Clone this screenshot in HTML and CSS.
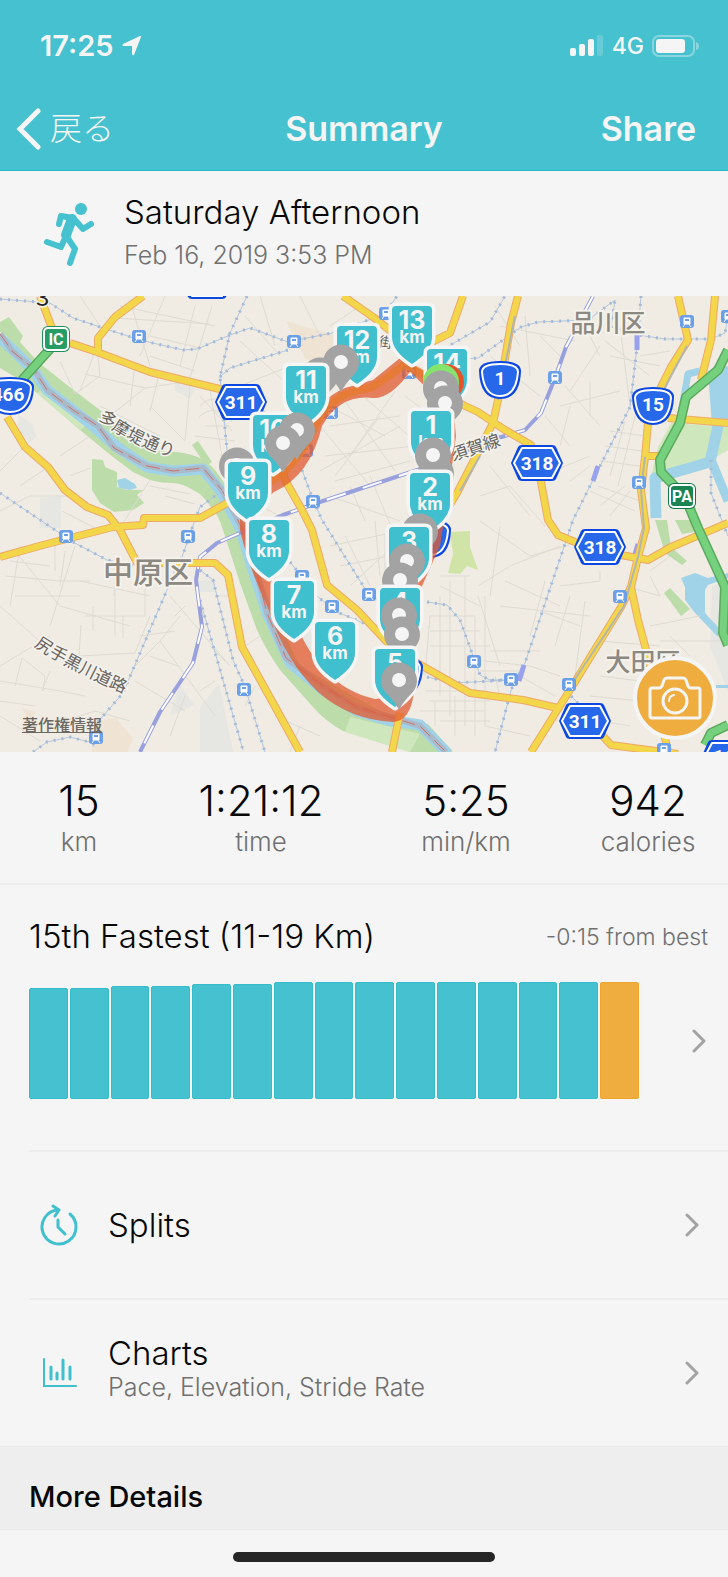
FILE: index.html
```html
<!DOCTYPE html>
<html lang="en">
<head>
    <meta charset="UTF-8">
    <meta name="viewport" content="width=device-width, initial-scale=1.0">
    <title>Summary</title>
    <link rel="stylesheet" href="styles.css">
</head>
<body>

    <header class="header">
        <div class="status-bar">
            <div class="status-left">
                <span class="clock">17:25</span>
                <svg width="20" height="20" viewBox="0 0 20 20"><path d="M19 1 L12 19 Q11 20 10 18 L10 10 L1 10 Q0 9 1 8 L18 0 Q20 0 19 1 Z" fill="#f5f5f5"/></svg>
            </div>
            <div class="status-right">
                <svg width="34" height="22" viewBox="0 0 34 22" fill="#f5f5f5">
                    <rect x="0" y="13" width="6" height="8" rx="2"/>
                    <rect x="9" y="9" width="6" height="12" rx="2"/>
                    <rect x="18" y="4" width="6" height="17" rx="2"/>
                    <rect x="27" y="0" width="6" height="21" rx="2" opacity="0.2"/>
                </svg>
                <span class="network">4G</span>
                <svg width="48" height="22" viewBox="0 0 48 22">
                    <rect x="1" y="1" width="41" height="20" rx="6" fill="none" stroke="#f5f5f5" stroke-width="2" opacity="0.4"/>
                    <rect x="4" y="4" width="29" height="14" rx="3" fill="#f5f5f5"/>
                    <path d="M44 7 Q47 8 47 11 Q47 14 44 15 Z" fill="#f5f5f5" opacity="0.4"/>
                </svg>
            </div>
        </div>
        <nav class="nav-bar">
            <a class="back" href="#">
                <svg width="26" height="42" viewBox="0 0 26 42"><path d="M22 3 L4 21 L22 39" fill="none" stroke="#f5f5f5" stroke-width="5" stroke-linecap="round"/></svg>
                <span>戻る</span>
            </a>
            <h1>Summary</h1>
            <button class="share">Share</button>
        </nav>
    </header>

    <section class="activity">
        <svg class="runner" width="52" height="66" viewBox="0 0 52 66" fill="none" stroke="#45c1cf" stroke-linecap="round" stroke-linejoin="round">
            <circle cx="37" cy="8" r="6" fill="#45c1cf" stroke="none"/>
            <path d="M15 23 L17 15 L29 17" stroke-width="6"/>
            <path d="M28 18 L22 34" stroke-width="10"/>
            <path d="M31 19 L39 28 L47 23" stroke-width="6"/>
            <path d="M22 35 L17 46 L3 41" stroke-width="6"/>
            <path d="M23 36 L31 48 L26 62" stroke-width="6"/>
        </svg>
        <div>
            <h2>Saturday Afternoon</h2>
            <p>Feb 16, 2019 3:53 PM</p>
        </div>
    </section>

    <section class="map">
        <svg class="map-canvas" viewBox="0 0 728 456">
            <defs>
                <g id="station">
                    <rect x="-7" y="-7" width="14" height="13" rx="3" fill="#6b9fe8"/>
                    <path d="M-3 -4 H3 V2 H-3 Z M-4 5 L-2 2 M4 5 L2 2" fill="#fff" stroke="#fff" stroke-width="1"/>
                    <path d="M-2 -2 H2" stroke="#6b9fe8" stroke-width="2"/>
                </g>
                <g id="hex">
                    <path d="M-15 -18 H15 Q18 -18 19 -16 L26 0 L19 16 Q18 18 15 18 H-15 Q-18 18 -19 16 L-26 0 L-19 -16 Q-18 -18 -15 -18 Z" fill="#0b47e0"/>
                    <path d="M-15 -15 H15 L23 0 L15 15 H-15 L-23 0 Z" fill="#2767ea" stroke="#fff" stroke-width="2" stroke-linejoin="round"/>
                </g>
                <g id="national">
                    <path d="M0 -19 Q21 -19 21 -9 Q20 19 0 19 Q-20 19 -21 -9 Q-21 -19 0 -19 Z" fill="#0b47e0"/>
                    <path d="M0 -16 Q18 -16 18 -8 Q16 16 0 16 Q-16 16 -18 -8 Q-18 -16 0 -16 Z" fill="#2767ea" stroke="#fff" stroke-width="2"/>
                </g>
                <path id="flag" d="M-20 4 Q-20 0 -16 0 H16 Q20 0 20 4 V31 Q20 45 0 58 Q-20 45 -20 31 Z" fill="#40bfce" stroke="#f5f5f5" stroke-width="7" paint-order="stroke" stroke-linejoin="round"/>
                <g id="pin">
                    <path d="M0 30 Q-4 22 -12 14 A18 18 0 1 1 12 14 Q4 22 0 30 Z" fill="#a3a3a3"/>
                    <circle r="7" fill="#f5f5f5"/>
                </g>
            </defs>

            <rect width="728" height="456" fill="#f0ece4"/>

            <!-- blocks and parks -->
            <g fill="#e6e6e3">
                <path d="M40 202 L61 200 L61 232 L40 232 Z M18 118 L32 128 L36 140 L30 147 L18 132 Z"/>
                <path d="M196 285 L216 283 L214 296 H200 Z M179 388 L194 409 L170 420 Z M200 412 L219 387 L233 456 H200 Z"/>
                <path d="M175 86 L195 92 L190 103 L175 95 Z M712 290 L728 285 V395 L710 350 Z M300 330 L318 340 L322 360 L306 352 Z"/>
            </g>
            <path d="M286 25 L335 39 V70 L305 63 Z M22 412 L36 416 L28 425 Z M96 425 L116 422 L133 442 L128 456 H92 Z" fill="#efe3d3"/>
            <g fill="#bcdcaa">
                <path d="M0 26 L9 21 L23 40 L19 48 L0 36 Z"/>
                <path d="M0 38 L20 46 L38 66 L67 89 L100 114 L127 137 Q140 148 150 152 Q162 156 177 156 Q192 158 200 162 Q212 168 220 181 L240 210 L262 290 L300 370 L380 415 L428 428 L453 456 H410 L343 435 Q325 425 313 411 L280 374 Q266 354 257 334 L240 287 L223 234 Q218 218 213 214 Q203 198 193 194 Q184 188 173 187 Q160 187 150 184 L133 176 L113 161 L80 134 L37 97 L20 84 L0 72 Z"/>
                <path d="M92 163 L103 164 L105 171 L117 176 V191 L127 194 L143 194 L137 199 L144 207 L133 214 L114 216 L100 207 L92 194 Z M192 149 L198 145 L212 166 L206 170 Z"/>
                <path d="M655 224 H667 L671 251 L687 265 L682 269 L665 257 Z M675 224 H690 L694 236 L682 238 Z M664 297 L670 292 L690 313 L681 320 Z"/>
            </g>
            <path d="M450 236 L470 235 V251 L478 274 L467 270 L460 278 L448 277 L453 258 Z" fill="#d0e4a8"/>
            <path d="M37 97 L45 92 L90 127 L80 134 Z M350 421 L420 438 L410 456 L345 436 Z M671 127 L728 131 V154 L708 166 L665 179 L650 184 L658 151 Z" fill="#cfe7bd"/>

            <!-- water -->
            <g fill="none" stroke="#a1d3e8" stroke-linejoin="round">
                <path d="M0 42 L13 54 L33 74 L47 94 L73 114 L93 130 L117 151 L147 171 L173 175 L203 173 L220 194 L240 232 L253 274 L267 317 L290 367 L323 394 L357 415 L387 424 L420 429 L448 458" stroke-width="11"/>
                <path d="M700 75 L688 78 L681 118" stroke-width="7"/>
                <path d="M656 222 L655 182 L710 166 L718 130 L719 70" stroke-width="11"/>
                <path d="M712 166 L728 205" stroke-width="9"/>
            </g>
            <path d="M708 75 L728 70 V130 H712 Z" fill="#a1d3e8"/>
            <path d="M117 184 L125 182 L135 188 L137 192 L130 194 L119 192 Z M681 282 L695 277 L708 282 L728 277 V282 L708 289 L705 294 V317 L718 331 V341 L695 317 L685 304 V291 Z M716 389 H728 V392 H716 Z" fill="#a1d3e8"/>
            <path d="M0 38 L13 56 L33 72 L47 94 L73 114 L98 130 L114 152 L147 170 L173 175 L203 172 L222 194 L243 234 L257 278 L267 317 L286 362 L323 390 L357 411 L387 420 L420 430 L446 456" fill="none" stroke="#a9bacb" stroke-width="6"/>
            <path d="M0 38 L13 56 L33 72 L47 94 L73 114 L98 130 L114 152 L147 170 L173 175 L203 172 L222 194 L243 234 L257 278 L267 317 L286 362 L323 390 L357 411 L387 420 L420 430 L446 456" fill="none" stroke="#cf7168" stroke-width="1" stroke-dasharray="14 6"/>

            <!-- small streets -->
            <g fill="none" stroke="#dedbd3" stroke-width="1">
                <path d="M80 0 L100 30 M130 5 L150 70 M165 0 L140 60 M195 10 L180 70 M120 10 L215 30 M150 40 L200 52 M100 42 L80 95 M150 60 L195 75 M135 68 L130 110 M160 75 L150 115 M115 22 L210 28 M212 10 L190 82"/>
                <path d="M60 65 L75 98 L100 80 L98 60 M85 78 L145 92 L110 120 M145 92 L190 85 M100 110 L160 140 M150 110 L185 145 M185 145 L190 90 M200 110 Q215 95 230 112 M198 122 Q215 105 232 126 M205 130 L230 130 M195 140 L235 145 M210 95 L222 160 M200 100 L232 135 M60 160 L90 140 M70 180 L90 172"/>
                <path d="M0 175 L25 150 M20 190 L48 171 M0 215 L30 200 L70 200 M150 184 L120 232 M150 190 L190 198 M62 215 L95 232 M165 200 L195 208"/>
                <path d="M245 20 L280 60 M260 0 L275 50 M240 90 L290 70 M300 0 L320 40 M360 10 L330 30 M240 45 L300 100 M310 100 L385 140 M330 130 L400 120 M325 160 L415 150 M320 175 L400 130 M345 105 L395 175 M365 102 L415 145 M320 130 L370 190 M335 185 L410 165 M350 190 L365 225 M380 120 L335 180 M395 95 L350 160 M330 200 L400 225 M370 180 L395 240 M250 205 L290 225 M405 100 L425 115"/>
                <path d="M490 60 L540 100 M525 20 L530 80 M540 40 L560 60 M560 110 L620 95 M565 90 L600 130 M590 85 V120 M600 50 L570 95 M610 60 L660 70 M605 45 L650 80 M620 30 L630 110 M580 20 L600 60 M500 30 L575 45 M640 60 L670 55 M545 120 L570 150 M560 150 L570 110 M540 180 L590 160 M480 200 L510 190 L545 230 M490 170 L530 220 M625 125 L610 180 M635 120 L618 190 M610 135 L645 140 M605 150 L642 155 M600 165 L640 170 M598 190 L640 205 M590 195 L635 215 M600 210 L625 190 M610 220 L630 195 M660 100 L690 130 M590 170 L570 185 M495 10 L520 50"/>
                <path d="M15 255 L60 310 L130 330 M10 265 L50 270 M5 280 L60 285 M15 300 L80 300 M20 250 L10 310 M55 250 V275 M65 255 L60 290 M75 250 L50 330 M0 310 L45 350 M60 285 H90 M93 310 V335 M85 320 H145 V290 M81 329 L79 360 L135 357 L150 320 M115 290 V340 M123 320 V342 M115 262 L114 300 M150 300 L80 285 M0 370 L50 340 M15 390 L22 362 L45 380 L43 395 M0 385 L60 395 L85 400 M50 375 L42 395 M160 345 L180 320 M160 345 L215 420 M160 345 L135 370 M140 340 L175 335 M150 360 L178 370 M170 300 L230 370 M185 310 L175 320 M135 385 L185 415 M200 395 L215 385 M0 405 L35 410 M0 420 L40 445 M50 430 L95 415 L130 425 M170 440 L185 400 M215 300 L232 300 M225 365 L210 350"/>
                <path d="M330 250 L400 235 M340 270 L390 260 M350 290 L415 230 M375 225 L380 280 M345 240 L370 290 M385 240 V290 M440 280 H470 M440 290 L480 310 M450 285 V420 M465 280 V430 M475 320 V440 M485 300 V430 M430 320 H475 M430 335 H480 M430 350 H490 M425 395 H488 M430 405 H490 M420 415 H485 M440 425 H490 M430 320 L425 380 M440 300 V400 M435 405 V430 M455 400 V440 M255 390 L245 410 M260 340 L245 350 M275 420 L320 440 M300 430 L290 456"/>
                <path d="M480 225 L530 260 L600 240 M478 290 L510 270 L560 250 M505 285 L560 310 M500 310 L590 320 M540 315 L580 330 M560 290 L600 285 V275 M545 285 L530 340 M570 300 L555 350 M585 305 L575 380 M500 230 L490 300 M478 300 L500 370 M490 355 H540 M485 365 L530 370 M495 380 L500 400 M480 375 H520 M650 275 L670 260 M640 270 L625 300 M625 290 L660 300 L650 280 M600 345 L660 350 M610 360 H650 M600 380 L640 385 M590 400 L640 405 M570 420 L630 430 M650 330 L700 320 M660 345 L720 345 M670 340 L690 360 M530 370 L560 380 M520 380 L555 400 M485 430 L530 440"/>
            </g>

            <!-- rail lines -->
            <g class="rail">
                <path id="rails" d="M0 3 L50 7 L73 22 L100 31 L140 44 L183 54 L197 53 L230 39 L250 32 L288 46 L332 37 L385 18 L397 0 M247 0 L230 37 L220 81 L227 154 M220 81 L230 72 L288 54 M0 197 L73 246 L107 264 L133 269 M240 180 L227 191 L200 211 L195 224 L182 261 L167 294 L137 364 L123 397 L97 427 L93 451 M200 274 L213 284 L233 364 L245 391 L265 456 M200 304 L243 454 M33 456 L47 446 L70 441 L93 447 M641 0 L637 51 L630 111 L598 174 L573 224 L525 367 L511 394 L495 456 M430 60 L447 51 L490 26 L505 0 M450 64 L478 62 L521 31 L538 26 L588 24 L615 4 L611 31 L638 39 L665 43 H711 L725 37 L728 20 M302 174 L312 201 L322 224 L367 296 L400 320 M290 266 L318 301 L337 316 L390 338 M427 306 L447 309 L460 324 L480 379 L490 384 L511 384 M427 381 L453 387 L511 384 M711 164 V197 L728 240 M571 400 L600 430 L611 449 L664 453"/>
            </g>
            <use href="#rails" class="rail-ties"/>
            <g fill="none" stroke-linejoin="round">
                <path d="M593 0 L566 51 L555 82 L541 117 L525 134 L498 142 L417 174 L320 206 L283 219 L240 237 L217 247 L200 261 L196 284 L202 331 L193 367 L160 416 L140 456" stroke="#98a1de" stroke-width="4"/>
                <path d="M593 0 L566 51 L555 82 L541 117 L525 134 L498 142 L417 174 L320 206 L283 219 L240 237 L217 247 L200 261 L196 284 L202 331 L193 367 L160 416 L140 456" stroke="#fff" stroke-width="2" stroke-dasharray="20 18"/>
                <path d="M637 39 V54 M598 170 L593 185 M638 248 L634 262 M524 369 L519 385" stroke="#98a1ee" stroke-width="5"/>
            </g>

            <!-- main roads, drawn twice for the orange edge -->
            <g fill="none" stroke="#eda968" stroke-width="8" stroke-linejoin="round">
                <path id="roads" d="M40 0 L53 35 M70 47 L97 56 L150 76 L240 98 L275 130 L285 184 L302 214 L312 234 L327 289 L357 314 L387 346 L417 367 L470 397 L523 404 L558 412 M143 0 L115 21 L98 42 V57 M7 121 L25 151 L48 171 L65 194 L87 211 L108 219 L120 234 L137 267 H215 L228 279 L242 351 L273 407 L300 456 M0 261 L43 249 L113 231 L143 229 L144 222 H200 L240 200 M343 0 L373 21 L410 50 M463 0 L450 37 L430 47 M430 90 L463 109 L478 116 L505 134 L531 149 L541 186 L548 224 L558 239 L575 246 L621 259 L648 264 L671 251 L728 227 M518 0 L511 27 L498 104 L493 127 L457 197 L440 225 M678 0 L688 44 L671 71 L661 91 L648 127 L645 161 L641 194 L646 232 L638 261 L631 291 L621 311 L578 381 L531 456 M631 291 L638 324 L648 361 L668 456 M715 0 L711 44 L701 84 M668 122 L728 127 M645 160 H660 M600 437 L611 449 L678 458 M400 417 L392 456"/>
            </g>
            <use href="#roads" fill="none" class="road-fill"/>
            <path d="M687 50 L671 80 L661 100 M645 161 L641 194 L644 232 L638 261 L624 310 L571 389 M515 20 L498 104 M480 160 L460 195" fill="none" stroke="#b3b5ae" stroke-width="2"/>
            <g fill="none" stroke-linejoin="round">
                <path d="M728 54 L718 74 L686 101 L680 127 L660 164 L661 176 L685 201 L698 232 L725 291 L723 337 L728 349 M705 449 L711 437 L728 429 M50 53 L22 84" stroke="#5ba95c" stroke-width="10"/>
                <path d="M728 54 L718 74 L686 101 L680 127 L660 164 L661 176 L685 201 L698 232 L725 291 L723 337 L728 349 M705 449 L711 437 L728 429 M50 53 L22 84" stroke="#76d17f" stroke-width="7"/>
            </g>

            <!-- stations -->
            <use href="#station" x="139" y="41"/>
            <use href="#station" x="294" y="46"/>
            <use href="#station" x="386" y="18"/>
            <use href="#station" x="409" y="77"/>
            <use href="#station" x="331" y="117"/>
            <use href="#station" x="306" y="155"/>
            <use href="#station" x="313" y="206"/>
            <use href="#station" x="687" y="26"/>
            <use href="#station" x="728" y="21"/>
            <use href="#station" x="555" y="82"/>
            <use href="#station" x="639" y="187"/>
            <use href="#station" x="66" y="241"/>
            <use href="#station" x="188" y="241"/>
            <use href="#station" x="244" y="394"/>
            <use href="#station" x="96" y="442"/>
            <use href="#station" x="302" y="281"/>
            <use href="#station" x="332" y="311"/>
            <use href="#station" x="369" y="299"/>
            <use href="#station" x="474" y="366"/>
            <use href="#station" x="511" y="384"/>
            <use href="#station" x="620" y="301"/>
            <use href="#station" x="569" y="389"/>
            <use href="#station" x="664" y="454"/>

            <!-- place names -->
            <g class="place">
                <text x="608" y="36" class="area">品川区</text>
                <text x="148" y="287" class="city">中原区</text>
                <text x="643" y="375" class="area">大田区</text>
            </g>
            <path id="tamatsutsumi" d="M98 122 Q125 148 185 165" fill="none"/>
            <path id="shitte" d="M34 350 Q75 378 140 404" fill="none"/>
            <g class="street-name">
                <text><textPath href="#tamatsutsumi">多摩堤通り</textPath></text>
                <text><textPath href="#shitte">尻手黒川道路</textPath></text>
                <text transform="translate(453 165) rotate(-18)">須賀線</text>
                <text class="small" transform="translate(378 50) rotate(10)">街</text>
                <text class="dark" x="36" y="10">3</text>
            </g>

            <!-- road shields -->
            <g class="shield">
                <use href="#hex" x="207" y="-15"/>
                <use href="#hex" x="241" y="106"/><text x="241" y="113">311</text>
                <use href="#hex" x="537" y="167"/><text x="537" y="174">318</text>
                <use href="#hex" x="600" y="251"/><text x="600" y="258">318</text>
                <use href="#hex" x="585" y="425"/><text x="585" y="432">311</text>
                <use href="#hex" x="727" y="462"/><text x="724" y="467">16</text>
                <use href="#national" x="500" y="84"/><text x="500" y="89">1</text>
                <use href="#national" x="653" y="110"/><text x="653" y="115">15</text>
                <use href="#national" x="430" y="243"/>
                <use href="#national" x="402" y="380"/>
                <path d="M10 -19 Q34 -19 34 -9 Q33 19 10 19 Q-13 19 -14 -9 Q-14 -19 10 -19 Z" transform="translate(0 100)" fill="#0b47e0"/>
                <path d="M10 -16 Q31 -16 31 -8 Q29 16 10 16 Q-9 16 -11 -8 Q-11 -16 10 -16 Z" transform="translate(0 100)" fill="#2767ea" stroke="#fff" stroke-width="2"/>
                <text x="8" y="105">466</text>
            </g>
            <g class="facility">
                <rect x="42" y="30" width="28" height="26" rx="6" fill="#1e8f5c"/>
                <rect x="44" y="32" width="24" height="22" rx="4" fill="#279d66" stroke="#fff" stroke-width="2"/>
                <text x="56" y="49">IC</text>
                <rect x="668" y="187" width="28" height="26" rx="6" fill="#0f7748"/>
                <rect x="670" y="189" width="24" height="22" rx="4" fill="#1a8552" stroke="#fff" stroke-width="2"/>
                <text x="682" y="206">PA</text>
            </g>

            <!-- run route -->
            <path d="M240 190 Q282 174 305 136 Q318 103 345 92 L373 84 L400 62 L427 77 L452 100 L456 140 L448 200 L440 250 L422 290 L414 350 L414 395 Q411 425 393 426 Q350 424 318 396 Q285 365 268 312 Q248 270 240 234 Z M274 196 L256 212 Q262 256 290 312 Q316 390 375 403 L400 400 L404 320 L425 240 L440 180 L444 110 L430 95 L410 76 Q390 103 373 102 Q340 98 322 130 Q310 180 274 196 Z" fill="#e2592f" fill-rule="evenodd" opacity="0.75"/>
            <path d="M262 190 Q296 174 314 132 Q330 96 370 92 Q385 84 405 68 L440 88" fill="none" stroke="#e57a28" stroke-width="8" opacity="0.7"/>

            <!-- km flags and photo pins, back to front -->
            <g class="marks">
                <use href="#flag" x="357" y="30"/><text x="357" y="53">12</text><text class="km" x="357" y="67">km</text>
                <use href="#pin" x="320" y="79"/>
                <use href="#pin" x="341" y="66"/>
                <use href="#flag" x="412" y="10"/><text x="412" y="33">13</text><text class="km" x="412" y="47">km</text>
                <use href="#flag" x="306" y="70"/><text x="306" y="93">11</text><text class="km" x="306" y="107">km</text>
                <use href="#flag" x="273" y="119"/><text x="273" y="142">10</text><text class="km" x="273" y="156">km</text>
                <use href="#pin" x="297" y="134"/>
                <use href="#pin" x="283" y="147"/>
                <use href="#pin" x="237" y="169"/>
                <use href="#flag" x="248" y="166"/><text x="248" y="189">9</text><text class="km" x="248" y="203">km</text>
                <use href="#flag" x="269" y="224"/><text x="269" y="247">8</text><text class="km" x="269" y="261">km</text>
                <use href="#flag" x="294" y="285"/><text x="294" y="308">7</text><text class="km" x="294" y="322">km</text>
                <use href="#flag" x="335" y="326"/><text x="335" y="349">6</text><text class="km" x="335" y="363">km</text>

                <use href="#flag" x="447" y="53"/><text x="447" y="76">14</text><text class="km" x="447" y="90">km</text>
                <circle cx="446" cy="86" r="18" fill="#e4532a"/>
                <circle cx="441" cy="86" r="18" fill="#84e46c"/>
                <use href="#pin" x="441" y="92"/>
                <use href="#pin" x="445" y="107"/>
                <use href="#flag" x="431" y="115"/><text x="431" y="138">1</text><text class="km" x="431" y="152">km</text>
                <use href="#pin" x="436" y="177"/>
                <use href="#pin" x="433" y="159"/>
                <use href="#flag" x="430" y="177"/><text x="430" y="200">2</text><text class="km" x="430" y="214">km</text>
                <use href="#pin" x="420" y="235"/>
                <use href="#flag" x="409" y="231"/><text x="409" y="254">3</text><text class="km" x="409" y="268">km</text>
                <use href="#pin" x="407" y="265"/>
                <use href="#pin" x="400" y="284"/>
                <use href="#flag" x="400" y="292"/><text x="400" y="315">4</text><text class="km" x="400" y="329">km</text>
                <use href="#pin" x="399" y="319"/>
                <use href="#pin" x="402" y="338"/>
                <use href="#flag" x="395" y="353"/><text x="395" y="376">5</text><text class="km" x="395" y="390">km</text>
                <use href="#pin" x="399" y="384"/>
            </g>
        </svg>
        <a class="legal" href="#">著作権情報</a>
        <button class="camera" aria-label="Add photo">
            <svg width="54" height="44" viewBox="0 0 54 44" fill="none" stroke="#f5f5f5" stroke-width="3" stroke-linejoin="round" stroke-linecap="round">
                <path d="M4 12 H11 Q13 12 14 10 L16 4 Q17 2 19 2 H35 Q37 2 38 4 L40 10 Q41 12 43 12 H50 Q52 12 52 14 V40 Q52 42 50 42 H4 Q2 42 2 40 V14 Q2 12 4 12 Z"/>
                <circle cx="27" cy="25" r="12"/>
                <path d="M21 25 Q21 20 26 19" stroke-width="2"/>
            </svg>
        </button>
    </section>

    <section class="stats">
        <div><strong>15</strong><span>km</span></div>
        <div><strong>1:21:12</strong><span>time</span></div>
        <div><strong>5:25</strong><span>min/km</span></div>
        <div><strong>942</strong><span>calories</span></div>
    </section>

    <section class="fastest">
        <div class="fastest-head">
            <h2>15th Fastest (11-19 Km)</h2>
            <span>-0:15 from best</span>
        </div>
        <div class="fastest-body">
            <div class="bars">
                <div class="bar" style="height: 111px"></div>
                <div class="bar" style="height: 111px"></div>
                <div class="bar" style="height: 113px"></div>
                <div class="bar" style="height: 113px"></div>
                <div class="bar" style="height: 115px"></div>
                <div class="bar" style="height: 115px"></div>
                <div class="bar" style="height: 117px"></div>
                <div class="bar" style="height: 117px"></div>
                <div class="bar" style="height: 117px"></div>
                <div class="bar" style="height: 117px"></div>
                <div class="bar" style="height: 117px"></div>
                <div class="bar" style="height: 117px"></div>
                <div class="bar" style="height: 117px"></div>
                <div class="bar" style="height: 117px"></div>
                <div class="bar current" style="height: 117px"></div>
            </div>
            <svg class="chevron" width="14" height="24" viewBox="0 0 14 24"><path d="M2 2 L12 12 L2 22"/></svg>
        </div>
    </section>

    <a class="row" href="#">
        <svg class="row-icon" width="40" height="42" viewBox="0 0 40 42" fill="none" stroke="#40bfce" stroke-width="3" stroke-linecap="round" stroke-linejoin="round">
            <path d="M31 10 A17 17 0 1 1 19 6"/>
            <path d="M14 2 L20 6 L16 12"/>
            <path d="M19 16 V23 L26 30"/>
        </svg>
        <div class="row-text">
            <h2>Splits</h2>
        </div>
        <svg class="chevron" width="14" height="24" viewBox="0 0 14 24"><path d="M2 2 L12 12 L2 22"/></svg>
    </a>

    <a class="row" href="#">
        <svg class="row-icon" width="40" height="32" viewBox="0 0 40 32" fill="none" stroke="#40bfce" stroke-width="3" stroke-linecap="round">
            <path d="M5 2 V29 H37" stroke-width="2"/>
            <path d="M12 10 V22 M18 16 V22 M24 3 V22 M31 10 V22"/>
        </svg>
        <div class="row-text">
            <h2>Charts</h2>
            <p>Pace, Elevation, Stride Rate</p>
        </div>
        <svg class="chevron" width="14" height="24" viewBox="0 0 14 24"><path d="M2 2 L12 12 L2 22"/></svg>
    </a>

    <h3 class="more">More Details</h3>

    <div class="home-area">
        <div class="home-indicator"></div>
    </div>

</body>
</html>
```
FILE: styles.css
```css
* {
    box-sizing: border-box;
}

body {
    margin: 0;
    background-color: #f5f5f5;
    color: #080808;
    font-family: Inter, "Noto Sans CJK JP", sans-serif;
    font-weight: 300;
}

h1, h2, h3, p {
    margin: 0;
}

a {
    color: inherit;
    text-decoration: none;
}

button {
    border: none;
    padding: 0;
    background: none;
    color: inherit;
    font-family: inherit;
    cursor: pointer;
}

svg {
    display: block;
    flex-shrink: 0;
}

/* header */
.header {
    background-color: #45c1cf;
    border-bottom: 1px solid #2bb9ca;
    color: #f5f5f5;
}

.status-bar {
    display: flex;
    justify-content: space-between;
    align-items: center;
    height: 91px;
    padding: 0 28px 0 40px;
}

.status-left, .status-right {
    display: flex;
    align-items: center;
    gap: 8px;
}

.clock {
    font-size: 29px;
    font-weight: 600;
}

.network {
    font-size: 23px;
    font-weight: 500;
}

.nav-bar {
    display: grid;
    grid-template-columns: 1fr auto 1fr;
    align-items: center;
    height: 79px;
    padding: 0 32px 4px 16px;
}

.back {
    display: flex;
    align-items: center;
    gap: 8px;
    font-size: 32px;
    line-height: 42px;
}

.nav-bar h1, .share {
    font-size: 34px;
    font-weight: 600;
}

.nav-bar h1 {
    padding-left: 16px;
}

.share {
    justify-self: end;
}

/* activity title */
.activity {
    display: flex;
    align-items: center;
    gap: 28px;
    height: 125px;
    padding-left: 44px;
}

h2 {
    font-size: 33px;
    line-height: 43px;
    font-weight: 300;
}

p {
    font-size: 25px;
    line-height: 42px;
    color: #707070;
}

/* map */
.map {
    position: relative;
    overflow: hidden;
}

.map-canvas {
    width: 100%;
    height: auto;
}

.rail {
    fill: none;
    stroke: #b4c6dd;
    stroke-width: 1;
}

.rail-ties {
    fill: none;
    stroke: #a3bad8;
    stroke-width: 3;
    stroke-dasharray: 2 6;
}

.road-fill {
    stroke: #f4d64a;
    stroke-width: 6;
    stroke-linejoin: round;
}

#roads, #rails {
    stroke-width: inherit;
}

.place text {
    fill: #8c8882;
    stroke: #f5f2ec;
    stroke-width: 4;
    paint-order: stroke;
    text-anchor: middle;
    font-family: "Noto Sans CJK JP", sans-serif;
    font-weight: 500;
}

.place .area {
    font-size: 25px;
}

.place .city {
    font-size: 30px;
}

.street-name text {
    fill: #66635f;
    stroke: #f5f2ec;
    stroke-width: 3;
    paint-order: stroke;
    font-family: "Noto Sans CJK JP", sans-serif;
    font-weight: 400;
    font-size: 17px;
}

.street-name .small {
    font-size: 14px;
}

.street-name .dark {
    fill: #222;
    font-size: 24px;
}

.shield text, .facility text {
    fill: #fff;
    text-anchor: middle;
    font-family: Roboto, sans-serif;
    font-weight: 700;
    font-size: 19px;
}

.facility text {
    font-size: 16px;
}

.marks text {
    fill: #f5f5f5;
    text-anchor: middle;
    font-weight: 700;
    font-size: 25px;
}

.marks .km {
    font-size: 17px;
}

.legal {
    position: absolute;
    left: 22px;
    bottom: 16px;
    color: #6b6862;
    font-family: "Noto Sans CJK JP", sans-serif;
    font-size: 16px;
    line-height: 24px;
    font-weight: 500;
    text-decoration: underline;
}

.camera {
    position: absolute;
    right: 11px;
    bottom: 12px;
    display: flex;
    justify-content: center;
    align-items: center;
    width: 84px;
    height: 84px;
    border: 4px solid #f5f5f5;
    border-radius: 50%;
    background-color: #efad3f;
}

/* stats */
.stats {
    display: grid;
    grid-template-columns: 158fr 206fr 204fr 160fr;
    height: 133px;
    padding-top: 25px;
    border-bottom: 2px solid #ededed;
    text-align: center;
}

.stats strong {
    display: block;
    font-size: 42px;
    line-height: 48px;
    font-weight: 300;
}

.stats span {
    font-size: 26px;
    line-height: 34px;
    color: #707070;
}

/* fastest runs */
.fastest {
    height: 265px;
    padding-top: 30px;
}

.fastest-head {
    display: flex;
    justify-content: space-between;
    align-items: center;
    padding: 0 20px 0 29px;
}

.fastest-head span {
    font-size: 23px;
    color: #707070;
}

.fastest-body {
    display: flex;
    justify-content: space-between;
    align-items: center;
    margin-top: 24px;
    padding: 0 22px 0 29px;
}

.bars {
    display: flex;
    flex: 1;
    align-items: flex-end;
    gap: 2px;
    margin-right: 53px;
}

.bar {
    flex: 1;
    border: 1px solid #35bccb;
    border-radius: 2px;
    background-color: #45c1cf;
}

.current {
    border-color: #efa62c;
    background-color: #efad3f;
}

.chevron {
    fill: none;
    stroke: #a3a3a3;
    stroke-width: 3;
    stroke-linecap: round;
    stroke-linejoin: round;
}

/* list rows */
.row {
    display: flex;
    align-items: center;
    height: 148px;
    margin-left: 29px;
    padding-right: 29px;
    border-top: 2px solid #ededed;
}

.row-icon {
    margin-left: 10px;
}

.row-text {
    flex: 1;
    margin-left: 29px;
}

.row-text h2 {
    line-height: 36px;
}

.row-text p {
    line-height: 32px;
    padding-bottom: 8px;
}

.more {
    height: 84px;
    padding: 20px 29px 0;
    border-top: 1px solid #e9e9e9;
    border-bottom: 1px solid #e9e9e9;
    background-color: #eee;
    font-size: 29px;
    line-height: 60px;
    font-weight: 500;
}

.home-area {
    padding: 22px 0 16px;
}

.home-indicator {
    width: 36%;
    height: 10px;
    margin: 0 auto;
    border-radius: 5px;
    background-color: #262626;
}
```
